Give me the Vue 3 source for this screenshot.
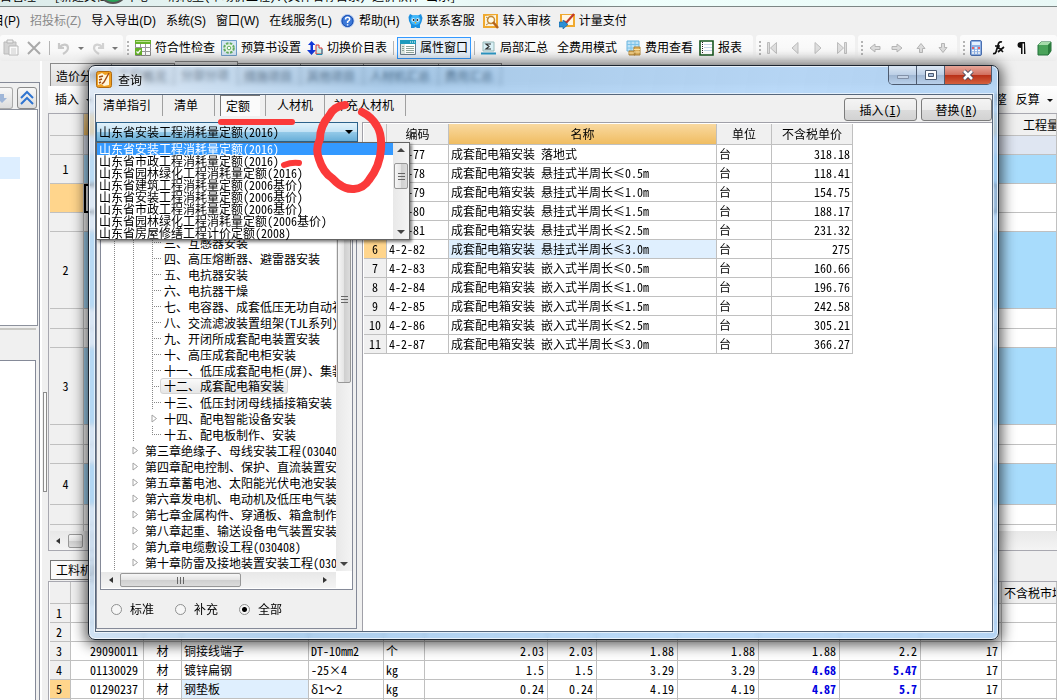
<script setup>
import { ref } from 'vue'

const menus = [
  { t: '目(P)' }, { t: '招投标(Z)', dim: true }, { t: '导入导出(D)' }, { t: '系统(S)' }, { t: '窗口(W)' },
  { t: '在线服务(L)' }, { t: '帮助(H)', icon: 'help' }, { t: '联系客服', icon: 'support' },
  { t: '转入审核', icon: 'audit' }, { t: '计量支付', icon: 'pay' },
]
const pages = ['造价分析', '工程概况', '分部分项', '措施项目', '其他项目', '人材机汇总', '费用汇总']
const upperRows = [
  { h: 19, c: 'pale' }, { n: '1', h: 29, c: 'blue' }, { h: 29, c: 'cur' }, { h: 19 },
  { n: '2', h: 77, c: 'blue' }, { h: 20 }, { h: 19 }, { n: '3', h: 77, c: 'blue' }, { h: 20 }, { h: 19 },
  { n: '4', h: 41, c: 'blue' }, { h: 20 }, { h: 7 },
]
const lowerRows = [
  ['1'], ['2'],
  ['3', '29090011', '材', '铜接线端子', 'DT-10mm2', '个', '2.03', '2.03', '1.88', '1.88', '1.88', '2.2', '17', ''],
  ['4', '01130029', '材', '镀锌扁钢', '-25×4', 'kg', '1.5', '1.5', '3.29', '3.29', '4.68', '5.47', '17', ''],
  ['5', '01290237', '材', '钢垫板', 'δ1～2', 'kg', '0.24', '0.24', '4.19', '4.19', '4.87', '5.7', '17', ''],
  [''],
]
const tabs = ['清单指引', '清单', '定额', '人材机', '补充人材机']
const books = [
  '山东省安装工程消耗量定额(2016)', '山东省市政工程消耗量定额(2016)', '山东省园林绿化工程消耗量定额(2016)',
  '山东省建筑工程消耗量定额(2006基价)', '山东省安装工程消耗量定额(2006基价)', '山东省市政工程消耗量定额(2006基价)',
  '山东省园林绿化工程消耗量定额(2006基价)', '山东省房屋修缮工程计价定额(2008)',
]
const book = ref(books[0])
const scope = ref('全部')
const tree = [
  '三、互感器安装', '四、高压熔断器、避雷器安装', '五、电抗器安装', '六、电抗器干燥', '七、电容器、成套低压无功自动补',
  '八、交流滤波装置组架(TJL系列)', '九、开闭所成套配电装置安装', '十、高压成套配电柜安装', '十一、低压成套配电柜(屏)、集装',
  '十二、成套配电箱安装', '十三、低压封闭母线插接箱安装', '十四、配电智能设备安装', '十五、配电板制作、安装',
].map((t) => ({ t, leaf: !t.startsWith('十四'), sel: t.startsWith('十二'), last: t.startsWith('十五'), lv: 3 })).concat([
  '第三章绝缘子、母线安装工程(03040', '第四章配电控制、保护、直流装置安', '第五章蓄电池、太阳能光伏电池安装', '第六章发电机、电动机及低压电气装',
  '第七章金属构件、穿通板、箱盒制作', '第八章起重、输送设备电气装置安装', '第九章电缆敷设工程(030408)', '第十章防雷及接地装置安装工程(030',
].map((t) => ({ t, leaf: false, lv: 2 })))
const quota = [
  ['落地式', '318.18'], ['悬挂式半周长≤0.5m', '118.41'], ['悬挂式半周长≤1.0m', '154.75'], ['悬挂式半周长≤1.5m', '188.17'],
  ['悬挂式半周长≤2.5m', '231.32'], ['悬挂式半周长≤3.0m', '275'], ['嵌入式半周长≤0.5m', '160.66'], ['嵌入式半周长≤1.0m', '196.76'],
  ['嵌入式半周长≤1.5m', '242.58'], ['嵌入式半周长≤2.5m', '305.21'], ['嵌入式半周长≤3.0m', '366.27'],
].map(([s, p], i) => ({ n: i + 1, code: '4-2-' + (77 + i), name: '成套配电箱安装 ' + s, price: p }))
</script>

<template>
  <div class="app">
    <header class="caption"><span>目管理 - [新建文档 - 中心 - 消耗量(市场价工程).(文件名称目录) 造价软件 山东]</span><i class="orb"></i></header>

    <nav class="menu">
      <button v-for="m in menus" :key="m.t" :class="{ dim: m.dim, wi: m.icon }">
        <svg v-if="m.icon === 'help'" width="15" height="16" viewBox="0 0 15 16"><circle cx="7.500" cy="8" r="6.500" fill="#3b78d8" stroke="#b8cdf0" /><circle cx="7.500" cy="8" r="5.500" fill="none" stroke="#1b4fb0" /><path d="M5.500 6.500q0-2.200 2.100-2.200t2.100 2q0 1.200-2.100 2.300V10M7.600 11.200v1.300" fill="none" stroke="#fff" stroke-width="1.500" /></svg>
        <svg v-else-if="m.icon === 'support'" width="15" height="16" viewBox="0 0 15 16"><path d="M2 1l3 1.500h5L13 1l1.500 4-1 4L12 12v3H9l-1.500-1L6 15H3v-3L1 8 .5 4z" fill="#1b8fe0" /><circle cx="7.500" cy="7" r="5" fill="#42b8fa" /><circle cx="5.300" cy="7" r="1.800" fill="#fff" /><circle cx="9.700" cy="7" r="1.800" fill="#fff" /><circle cx="5.600" cy="7" r="1" fill="#123" /><circle cx="9.400" cy="7" r="1" fill="#123" /><path d="M6.500 9h2l-1 2z" fill="#f9b233" /></svg>
        <svg v-else-if="m.icon === 'audit'" width="16" height="16" viewBox="0 0 16 16"><path d="M0 1h15v14H0z" fill="#f0a92e" /><path d="M2 3l11-1v11H2z" fill="#fbf4df" /><circle cx="8" cy="7" r="3.500" fill="#fffbe8" stroke="#c58a35" stroke-width="1.500" /><path d="M10 9l5 6" stroke="#b5651d" stroke-width="2.500" /><path d="M3 4l3 2M3 12l3-2" stroke="#b98b52" /></svg>
        <svg v-else-if="m.icon === 'pay'" width="16" height="16" viewBox="0 0 16 16"><path d="M1 1h15v13H1z" fill="#f0a92e" /><path d="M3 2h11v10H3z" fill="#fff6e4" /><path d="M15 1L7 10l-2-2" fill="none" stroke="#c0392b" stroke-width="2.200" /><path d="M0 9h4V7l5 4.500L4 16v-2H0z" fill="#2b8fd6" stroke="#0e5e9c" stroke-width=".6" /></svg>
        {{ m.t }}
      </button>
    </nav>

    <div class="tools">
      <div class="band b1">
        <button aria-label="粘贴"><svg width="16" height="18" viewBox="0 0 16 18"><path d="M1 3h12v12H1z" fill="#d4d4d4" stroke="#bbb" /><path d="M4 1h6v3H4z" fill="#eee" stroke="#b5b5b5" /><path d="M6 7h9v9H6z" fill="#fafafa" stroke="#b8b8b8" /><path d="M8 10h5M8 12h5M8 14h5" stroke="#ccc" /></svg></button>
        <button class="g7" aria-label="删除"><svg width="16" height="16" viewBox="0 0 16 16"><path d="M2 2l12 12M14 2L2 14" stroke="#a9a9a9" stroke-width="2" /></svg></button>
        <i class="sep g7"></i>
        <button class="g7" aria-label="撤销"><svg width="14" height="14" viewBox="0 0 14 14"><path d="M2 2v5h5M2.500 6.500C6 2 11 3 11 7q0 3-5 6" fill="none" stroke="#c9c9c9" stroke-width="2.200" /></svg></button>
        <i class="dd g7 gray"></i>
        <button class="g7" aria-label="重做"><svg width="14" height="14" viewBox="0 0 14 14"><path d="M12 2v5H7M11.500 6.500C8 2 3 3 3 7q0 3 5 6" fill="none" stroke="#d2d2d2" stroke-width="2.200" /></svg></button>
        <i class="dd g7 gray"></i>
      </div>
      <div class="band b2">
        <i class="grip"></i>
        <button><svg width="16" height="16" viewBox="0 0 16 16"><path d="M.5.5h15v15H.5z" fill="#fff" stroke="#888" /><path d="M0 0h16v4H0z" fill="#67b22b" /><path d="M1 1.500h14" stroke="#b9e08c" /><path d="M0 7.500h16M0 11.500h16M5.500 4v12M10.500 4v12" stroke="#999" /><path d="M0 8h7v7H0z" fill="#67b22b" /><path d="M1.500 11.500L3 13l2.500-3" fill="none" stroke="#fff" stroke-width="1.200" /></svg>符合性检查</button>
        <button><svg width="16" height="16" viewBox="0 0 16 16"><path d="M.5.5h15v15H.5z" fill="#d6e6f4" stroke="#6f9fca" /><circle cx="8" cy="8" r="4.800" fill="#eaf6e6" stroke="#63ad60" stroke-width="2" stroke-dasharray="2.500 1.300" /><circle cx="8" cy="8" r="1.800" fill="#fff" stroke="#63ad60" /></svg>预算书设置</button>
        <button><svg width="16" height="16" viewBox="0 0 16 16"><path d="M4.500 1L1 5h2.500v5H0l4.500 5L9 10H6V5h2.500z" fill="#1238d8" /><path d="M9 9V5h3v3h3v6H9z" fill="#c8f1ee" stroke="#d33" /><path d="M9.500 14.500H15V9" fill="none" stroke="#1a93b8" /></svg>切换价目表</button>
        <i class="sep"></i>
        <button class="on"><svg width="16" height="16" viewBox="0 0 16 16"><path d="M.5.5h15v14H.5z" fill="#fff" stroke="#687c8c" /><path d="M0 0h16v4H0z" fill="#1c9bbd" /><path d="M10 2h1M12 2h1M14 2h1" stroke="#fff" /><path d="M1 4h4v10H1z" fill="#dde9e2" /><path d="M2 6.500h2M2 8.500h2M2 10.500h2M6 6.500h8M6 8.500h8M6 10.500h8M6 12.500h8" stroke="#8fa69a" /></svg>属性窗口</button>
        <i class="sep"></i>
        <button><svg width="15" height="16" viewBox="0 0 15 16"><path d="M2 2h11v9H2z" fill="#d9f0f6" stroke="#9bb" /><path d="M10 4H5l3 2.500L5 9h5" fill="none" stroke="#333" stroke-width="1.200" /><path d="M0 13.500h15" stroke="#2b97c4" stroke-width="2" /></svg>局部汇总</button>
        <button class="plain">全费用模式</button>
        <button><svg width="15" height="16" viewBox="0 0 15 16"><path d="M1 1h12v10H1z" fill="#bfe3f7" stroke="#6bb4de" /><path d="M1 4.500h12M1 8h12M5 1v10M9 1v10" stroke="#7cc3ea" /><path d="M3 11h6v4H3zM8 7h6v8H8z" fill="#e0b25c" stroke="#b08438" /><path d="M8 9.500h6M8 12h6M3 13h5" stroke="#fbe2a4" /></svg>费用查看</button>
        <button><svg width="15" height="16" viewBox="0 0 15 16"><path d="M1 1h13v14H1z" fill="#fff" stroke="#17581f" stroke-width="1.600" /><path d="M3.500 2v12" stroke="#222" stroke-dasharray="1 1" /><path d="M5 4.500h8M5 7.500h8M5 10.500h8" stroke="#c3d5e5" /></svg>报表</button>
      </div>
      <div class="band b3">
        <i class="grip"></i>
        <svg width="88" height="14" viewBox="0 0 88 14" fill="#dedede" stroke="#bdbdbd"><path d="M4.500 1.500h2v11h-2zM13.500 1.500v11l-6-5.500zM35 1.500v11L29 7zM52 1.500v11L58 7zM74.500 1.500v11l6-5.500zM81.500 1.500h2v11h-2z" /></svg>
      </div>
      <div class="band b3">
        <i class="grip"></i>
        <svg width="88" height="14" viewBox="0 0 88 14" fill="#dcdcdc" stroke="#b5b5b5"><path d="M5 7l5-4v2.500h5v3h-5V11zM37 7l-5-4v2.500h-5v3h5V11zM56 2.500l4 5h-2.500v4h-3v-4H52zM78 11.500l4-5h-2.500v-4h-3v4H74z" /></svg>
      </div>
      <div class="band b4">
        <i class="grip"></i>
        <svg width="94" height="18" viewBox="0 0 94 18"><rect x="3.500" y="1.500" width="11" height="15" rx="1.500" fill="#8fb2e6" stroke="#4a6fb0" /><path d="M5 3h8v3H5z" fill="#e6f2ff" /><path d="M5 9h2M8 9h2M11 9h2M5 11.500h2M8 11.500h2M11 11.500h2M5 14h2M8 14h2M11 14h2" stroke="#fff" stroke-width="1.500" /><path d="M5 9h2M11 9h2" stroke="#e33" stroke-width="1.500" /><path d="M35 3q-3-1-4 3l-2 7q-.6 2-3 1.500M28 7h5M31 8l5 5M37 8l-6 5" fill="none" stroke="#111" stroke-width="1.700" /><path d="M58 3h-4q-3.500 0-3.500 3t3.500 3v6h1.500V4.500H57V15h1.500z" fill="#111" /><path d="M71 6l3-3h10v9l-3 4H71z" fill="#4aa35a" stroke="#23713a" /><path d="M71 6l3-3h10l-3 3z" fill="#a6dcaa" /><path d="M81 6l3-3v9l-3 4z" fill="#2c7c3d" /></svg>
      </div>
    </div>

    <div class="work">
      <aside class="side">
        <div class="navbtns">
          <button class="cut" aria-label="下移"><svg width="12" height="12" viewBox="0 0 12 12"><path d="M0 2h4v4h3L2 11 0 9z" fill="#9fb6d8" /></svg></button>
          <button aria-label="折叠"><svg width="16" height="16" viewBox="0 0 16 16"><path d="M2 8l6-6 6 6M2 14l6-6 6 6" fill="none" stroke="#2f74d0" stroke-width="2" /></svg></button>
        </div>
        <div class="sbox"><i></i></div>
        <div class="sgap"></div>
        <div class="sbox2"></div>
      </aside>
      <div class="split"><i></i></div>
      <main class="main">
        <div class="pages"><button v-for="(p, i) in pages" :key="p" :class="{ act: i === 2 }">{{ p }}</button></div>
        <div class="cmds"><button>插入 <i class="dd"></i></button><span><button>整</button><button>反算 <i class="dd"></i></button></span></div>
        <div class="upper">
          <table>
            <colgroup><col class="c34" /><col /><col class="c60" /></colgroup>
            <thead><tr><th></th><th class="gold"></th><th class="qty">工程量</th></tr></thead>
            <tbody>
              <tr v-for="(r, i) in upperRows" :key="i" :class="r.c" :style="{ height: r.h + 'px' }"><th>{{ r.n }}</th><td></td><td></td></tr>
            </tbody>
          </table>
          <div class="hbar"><i class="al"></i><b></b></div>
        </div>
        <div class="ltabs"><button>工料机显示</button></div>
        <div class="lower">
          <table>
            <colgroup><col class="w21" /><col class="w73" /><col class="w38" /><col class="w127" /><col class="w75" /><col class="w41" /><col class="w123" /><col class="w49" /><col v-for="n in 5" :key="n" class="w81" /><col /></colgroup>
            <thead><tr><th v-for="n in 13" :key="n"></th><th class="mkt">不含税市场价</th></tr></thead>
            <tbody>
              <tr v-for="r in lowerRows" :key="r[0]">
                <th :class="{ cur: r[0] === '5' }">{{ r[0] }}</th>
                <td v-for="c in 13" :key="c" :class="{ num: c === 1 || (c > 5 && c < 13), mid: c === 2, hot: (c === 10 || c === 11) && r[0] > '3', pick: r[0] === '5' && c === 3 }">{{ r[c] }}</td>
              </tr>
            </tbody>
          </table>
        </div>
      </main>
    </div>

    <section class="dialog" role="dialog" aria-label="查询">
      <div class="dtitle">
        <svg width="16" height="17" viewBox="0 0 16 17"><rect x=".5" y=".5" width="15" height="16" rx="2" fill="#f0a020" stroke="#b06a10" /><path d="M2 4l4-2 3 2 4-1v11l-5 1-3-2-3 1z" fill="#fff7dc" /><path d="M13 2L8 11l-2 2M3 6l4-1M3 9l3-1M3 12l2-1" fill="none" stroke="#a04a12" stroke-width="1.400" /></svg>
        <h1>查询</h1>
        <div class="wbtns">
          <button aria-label="最小化"><svg width="14" height="12" viewBox="0 0 14 12"><path d="M1.500 6.500h11v3h-11z" fill="#c5d3e6" stroke="#8291a8" /></svg></button>
          <button aria-label="最大化"><svg width="14" height="12" viewBox="0 0 14 12"><path d="M1.500 1.500h11v9h-11z" fill="#fff" stroke="#4b5a70" /><path d="M4.500 4.500h5v3h-5z" fill="#a9bfdc" stroke="#4b5a70" /></svg></button>
          <button class="x" aria-label="关闭"><svg width="14" height="12" viewBox="0 0 14 12"><path d="M3 2l8 8M11 2l-8 8" stroke="#43465c" stroke-width="4.500" /><path d="M3 2l8 8M11 2l-8 8" stroke="#fff" stroke-width="2.600" /></svg></button>
        </div>
      </div>
      <div class="dbody">
        <div class="dtabs">
          <button v-for="(t, i) in tabs" :key="t" :class="{ act: i === 2 }"><span>{{ t }}</span></button>
          <div class="acts"><button>插入(<u>I</u>)</button><button>替换(<u>R</u>)</button></div>
        </div>
        <div class="cols">
          <div class="lcol">
            <div class="combo">
              <select v-model="book" aria-label="定额库"><option v-for="b in books" :key="b">{{ b }}</option></select>
              <div class="drop">
                <ul><li v-for="(b, i) in books" :key="b" :class="{ act: i === 0 }">{{ b }}</li></ul>
                <div class="vbar"><i class="au"></i><b class="t1"></b><i class="ad"></i></div>
              </div>
            </div>
            <div class="pane">
              <div class="treebox">
                <div class="trow">
                  <ul class="tree">
                    <li v-for="n in tree" :key="n.t" :class="['lv' + n.lv, { leaf: n.leaf, last: n.last }]">
                      <svg v-if="!n.leaf" width="7" height="9" viewBox="0 0 7 9"><path d="M1 1l4.500 3.500L1 8z" fill="#fff" stroke="#a2a2a2" /></svg>
                      <span :class="{ sel: n.sel }">{{ n.t }}</span>
                    </li>
                  </ul>
                  <div class="vbar"><i class="au"></i><b class="t2"></b><i class="ad"></i></div>
                </div>
                <div class="hbar"><i class="al"></i><b></b><i class="ar"></i></div>
              </div>
              <div class="radios">
                <label v-for="s in ['标准', '补充', '全部']" :key="s"><input v-model="scope" type="radio" name="scope" :value="s" />{{ s }}</label>
              </div>
            </div>
          </div>
          <div class="rcol">
            <table>
              <colgroup><col class="w23" /><col class="w62" /><col class="w268" /><col class="w55" /><col class="w81" /></colgroup>
              <thead><tr><th></th><th>编码</th><th class="gold">名称</th><th>单位</th><th>不含税单价</th></tr></thead>
              <tbody>
                <tr v-for="q in quota" :key="q.n" :class="{ act: q.n === 6 }"><th>{{ q.n > 5 ? q.n : '' }}</th><td>{{ q.code }}</td><td class="nm">{{ q.name }}</td><td>台</td><td class="num">{{ q.price }}</td></tr>
              </tbody>
            </table>
          </div>
        </div>
      </div>
      <svg class="marks" width="320" height="110" viewBox="0 0 320 110" fill="none" stroke="#fb3a3a" stroke-linecap="round" stroke-linejoin="round">
        <path d="M132 26H203" stroke-width="6" /><path d="M195 69q8-3 15-2" stroke-width="6" />
        <path d="M256 9Q245 10 240 20Q231 30 231 43Q226 53 230 63Q234 76 243 82Q254 94 265 93Q275 92 280 84Q291 70 292 53Q293 38 288 30Q283 21 273 16" stroke-width="8" />
      </svg>
    </section>
  </div>
</template>

<style>
html, body { margin: 0; overflow: hidden; background: #f0f0f0; }
</style>

<style scoped>
.app { position: relative; display: flex; flex-direction: column; height: 100vh; overflow: hidden; background: #f0f0f0; color: #000; font: 12px/16px "Noto Sans Mono CJK SC", "Liberation Serif", "Noto Sans CJK SC", monospace; white-space: nowrap; }
* { box-sizing: border-box; }
svg { flex: none; display: block; }
button { font: inherit; color: inherit; border: 0; padding: 0; margin: 0; background: none; white-space: nowrap; flex: none; }
ul { list-style: none; margin: 0; padding: 0; }
table { border-collapse: separate; border-spacing: 0; table-layout: fixed; }
th { font-weight: 400; background: #f0f0f0; }
th, td { padding: 0 2px; overflow: hidden; border: solid #c0c0c0; border-width: 0 1px 1px 0; }
.caption { position: relative; flex: none; height: 7px; overflow: hidden; background: linear-gradient(90deg, #dcebea, #eefdfb 40%, #e4f3f2 50%, #effffc 60%, #e9f8f6); border-bottom: 1px solid #7d8685; }
.caption span { display: block; margin-top: -12px; }
.orb { position: absolute; left: 98px; top: -26px; width: 30px; height: 30px; border-radius: 50%; background: #2aa558; border: 2px solid #555; }
.menu { flex: none; display: flex; align-items: center; gap: 10px; height: 28px; margin-left: -8px; font-family: "Liberation Sans", "Noto Sans CJK SC", sans-serif; }
.menu button { display: flex; align-items: center; gap: 4px; }
.menu .dim { color: #8a8a8a; }
.menu .wi { margin-left: -2px; }
.tools { flex: none; display: flex; gap: 3px; height: 26px; font-family: "Liberation Sans", "Noto Sans CJK SC", sans-serif; }
.band { display: flex; align-items: center; height: 26px; border-radius: 3px; background: linear-gradient(#fcfcfc, #f8f8f8 60%, #ececec); }
.b1 { width: 123px; padding-left: 3px; flex: none; }
.b2 { gap: 6px; width: 627px; flex: none; padding-left: 1px; }
.b3 { width: 99px; flex: none; padding-left: 3px; gap: 2px; }
.b4 { flex: 1; padding-left: 3px; gap: 2px; overflow: hidden; }
.band button { display: flex; align-items: center; gap: 4px; height: 22px; }
.g7 { margin-left: 7px; }
.sep { flex: none; width: 1px; height: 14px; background: #b4b4b4; }
.grip { flex: none; width: 2px; height: 15px; background: repeating-linear-gradient(#b4b4b4 0 2px, transparent 2px 4px); }
.band .on { border: 1px solid #3399ff; background: #e6f0fa; padding: 0 2px; margin: 0 -3px; }
.band .plain { margin: 0 3px; }
.dd { display: inline-block; width: 0; height: 0; border: solid transparent; border-width: 3px 3px 0; border-top-color: #111; vertical-align: middle; }
.dd.gray { border-top-color: #777; }
.work { flex: 1; min-height: 0; display: flex; }
.side { flex: none; width: 40px; margin-top: 21px; border: solid #858a98; border-width: 1px 1px 0 0; background: #f0f0f0; }
.navbtns { display: flex; gap: 4px; padding-top: 4px; height: 26px; }
.navbtns button { width: 20px; height: 22px; border: 1px solid #8a8a8a; border-radius: 3px; background: linear-gradient(#f8f8f8, #ddd); display: flex; align-items: center; justify-content: center; }
.navbtns .cut { width: 13px; border-left: 0; border-radius: 0 3px 3px 0; justify-content: flex-start; border-color: #aaa; }
.sbox { height: 217px; width: 38px; border: solid #8c919c; border-width: 1px 1px 1px 0; background: #fff; padding-top: 47px; }
.sbox i { display: block; width: 20px; height: 22px; background: #ddeeff; }
.sgap { height: 32px; margin-top: 2px; border-top: 2px solid #c8c8c4; width: 36px; }
.sbox2 { height: 100%; width: 36px; border: solid #858a98; border-width: 1px 1px 0 0; background: #fff; }
.split { flex: none; width: 8px; padding-top: 331px; border-left: 2px solid #fff; }
.split i { display: block; width: 4px; height: 100px; border: 1px solid #8c8c8c; margin-left: 1px; background: #fafafa; }
.main { flex: 1; min-width: 0; display: flex; flex-direction: column; }
.pages { flex: none; display: flex; padding: 2px 0 0 2px; height: 25px; }
.pages button { height: 24px; padding: 0 8px 0 6px; border: solid #8a8a8a; border-width: 1px 1px 0 0; background: linear-gradient(#f0f0f0, #dcdcdc); }
.pages button:first-child { border-left-width: 1px; padding: 0 7px 0 5px; }
.pages .act { margin-top: -2px; height: 26px; background: #f0f0f0; }
.cmds { flex: none; display: flex; justify-content: space-between; height: 27px; padding: 0 4px 0 7px; align-items: center; background: linear-gradient(#fff, #f0f0f0); font-family: "Liberation Sans", "Noto Sans CJK SC", sans-serif; }
.cmds .dd { margin-left: 4px; }
.cmds span { display: flex; gap: 9px; }
.upper { flex: none; height: 438px; border: solid #a8a8b0; border-width: 1px 0 1px 1px; padding-left: 1px; background: #f0f0f0; display: flex; flex-direction: column; }
.upper table { width: 100%; }
.upper tbody th { padding-right: 4px; }
.upper thead tr { height: 22px; }
.upper td { background: #fff; }
.blue td { background: #a8dcfc; }
.pale td { background: #dfe6f2; }
.cur th { background: #ffd58c; }
.cur td:nth-child(2) { border: 2px solid #000; }
.c34 { width: 34px; } .c60 { width: 60px; }
.gold { background: linear-gradient(#f9d9a0, #f0bd62); }
.qty { text-align: left; padding-left: 26px; }
.hbar { flex: none; display: flex; align-items: center; height: 16px; background: linear-gradient(#e8e8e8, #f4f4f4); }
.upper .hbar { height: 19px; margin-top: -1px; padding-left: 6px; gap: 8px; }
.upper .hbar b { width: 15px; }
.hbar b { height: 14px; border: 1px solid #979797; border-radius: 2px; background: linear-gradient(#f6f6f6, #e4e4e4 50%, #cfcfcf 52%, #dcdcdc); }
.al, .ar, .au, .ad { flex: none; width: 0; height: 0; border: 4px solid transparent; }
.al { border-width: 3px 4px 3px 0; border-right-color: #333; }
.ar { border-width: 3px 0 3px 4px; border-left-color: #333; }
.au { border-width: 0 4px 4px; border-bottom-color: #444; }
.ad { border-width: 4px 4px 0; border-top-color: #444; }
.ltabs { flex: none; height: 30px; padding: 9px 0 0 2px; }
.ltabs button { height: 20px; padding: 0 5px; border: 1px solid #777; background: #fafafa; }
.lower { flex: 1; min-height: 0; overflow: hidden; border: solid #a8a8b0; border-width: 1px 0 0 1px; padding-left: 1px; background: #fff; }
.lower table { width: 100%; }
.lower tbody th { padding-right: 4px; }
.lower thead tr { height: 22px; } .lower tbody tr { height: 19px; }
.w21 { width: 21px; } .w73 { width: 73px; } .w38 { width: 38px; } .w127 { width: 127px; } .w75 { width: 75px; } .w41 { width: 41px; } .w123 { width: 123px; } .w49 { width: 49px; } .w81 { width: 81px; }
.num { text-align: right; }
.lower .num { padding-right: 3px; }
.lower td:nth-child(2) { padding-right: 5px; }
.mid { text-align: center; }
.hot { color: #0000e0; font-weight: 700; }
.pick { background: #dfeffe; }
th.cur { background: #ffd58c; }
.mkt { text-align: left; }

.dialog { position: absolute; left: 88px; top: 65px; right: 58px; bottom: 60px; display: flex; flex-direction: column; padding: 0 6px 7px; border: 1px solid #1c2530; border-radius: 7px; background: linear-gradient(100deg, rgba(206, 222, 240, .6), rgba(120, 175, 225, .6) 30%, rgba(150, 198, 245, .65) 70%, rgba(150, 195, 240, .7)); backdrop-filter: blur(2px); box-shadow: inset 0 0 0 1px rgba(255, 255, 255, .7), 0 2px 14px 3px rgba(0, 0, 0, .65); }
.dtitle { flex: none; display: flex; height: 28px; padding: 5px 0 0 1px; }
.dtitle h1 { margin: 1px 0 0 6px; font: 12px/16px "Noto Sans CJK SC", sans-serif; flex: 1; text-shadow: 0 0 5px #fff, 0 0 8px #fff; }
.wbtns { display: flex; align-self: flex-start; margin-top: -5px; height: 19px; border: 1px solid #4d5b70; border-top: 0; border-radius: 0 0 5px 5px; overflow: hidden; }
.wbtns button { width: 28px; display: flex; align-items: center; justify-content: center; background: linear-gradient(#dce8f5, #bccfe6 48%, #9fb6d2 50%, #b9d0ea); border-right: 1px solid #4d5b70; }
.wbtns .x { width: 46px; border: 0; background: linear-gradient(#e7a79a, #d2705f 48%, #b82f16 50%, #d4603e); }
.dbody { flex: 1; min-height: 0; display: flex; flex-direction: column; background: #f0f0f0; border: 1px solid #56677c; box-shadow: 0 0 0 1px rgba(255, 255, 255, .6); margin-right: -1px; }
.dtabs { flex: none; display: flex; height: 27px; background: #f0f0f0; }
.dtabs > button { height: 21px; padding: 0 11px; border-right: 1px solid #a0a0a0; line-height: 20px; }
.dtabs > button span { display: block; height: 21px; }
.dtabs > button:first-child { padding-left: 7px; }
.dtabs > button:nth-child(2) { padding-right: 16px; }
.dtabs > .act { padding: 0 5px; }
.dtabs > .act span { padding: 0 10px 0 5px; border: solid #777; border-width: 1px 0 0 1px; background: #fafafa; }
.dtabs > button:nth-child(5) { padding-left: 9px; }
.acts { margin-left: auto; display: flex; gap: 4px; padding-top: 3px; }
.acts button { width: 73px; height: 23px; border: 1px solid #7c7c7c; border-radius: 3px; background: linear-gradient(#f4f4f4, #ececec 50%, #dcdcdc 52%, #d2d2d2); }
.acts button:last-child { width: 71px; }
.cols { flex: 1; min-height: 0; display: flex; gap: 4px; }
.lcol { flex: none; width: 262px; display: flex; flex-direction: column; }
.combo { position: relative; flex: none; height: 20px; }
.combo select { appearance: none; display: block; width: 262px; height: 20px; margin: 0; padding: 0 2px; font: inherit; line-height: 18px; border: 1px solid #2c628b; border-radius: 0; color: #000; background: linear-gradient(#e2f2fb, #c2e2f5 48%, #93c9e8 52%, #68aed8); }
.combo::after { content: ""; position: absolute; right: 5px; top: 8px; border: solid transparent; border-width: 4px 4px 0; border-top-color: #000; }
.drop { position: absolute; z-index: 2; left: 0; top: 20px; width: 314px; display: flex; border: 1px solid #646464; background: #fff; box-shadow: 2px 2px 3px rgba(0, 0, 0, .5); }
.drop ul { flex: 1; }
.drop li { height: 12px; line-height: 11px; padding-left: 2px; }
.drop .act { background: #3399ff; color: #fff; }
.vbar { flex: none; width: 16px; display: flex; flex-direction: column; align-items: center; padding: 5px 0; background: linear-gradient(90deg, #e8e8e8, #f4f4f4); }
.vbar b { width: 14px; border: 1px solid #979797; border-radius: 2px; background: repeating-linear-gradient(transparent 0 1px, #666 1px 2px, transparent 2px 3px) center / 7px 9px no-repeat, linear-gradient(90deg, #f6f6f6, #e4e4e4 50%, #cfcfcf 52%, #dcdcdc); }
.t1 { height: 26px; margin-top: 11px; }
.t2 { height: 168px; margin-top: 63px; }
.vbar .ad { margin-top: auto; }
.pane { flex: 1; min-height: 0; display: flex; flex-direction: column; width: 261px; padding: 0 3px; border: 1px solid #858a98; border-top: 0; margin: 0 0 2px; }
.treebox { flex: 1; min-height: 0; display: flex; flex-direction: column; border: 1px solid #858a98; background: #fff; padding-bottom: 1px; }
.trow { flex: 1; min-height: 0; display: flex; overflow: hidden; margin-bottom: 1px; }
.tree { flex: 1; min-width: 0; overflow: hidden; padding-top: 91px; background: repeating-linear-gradient(#888 0 1px, transparent 1px 2px) 13px 0 / 1px 100% no-repeat; }
.tree li { display: flex; align-items: center; height: 16px; }
.lv3 { padding-left: 50px; background: repeating-linear-gradient(#888 0 1px, transparent 1px 2px) 32px 0 / 1px 16px no-repeat; }
.lv3.leaf { padding-left: 59px; background: repeating-linear-gradient(#888 0 1px, transparent 1px 2px) 32px 0 / 1px 16px no-repeat, repeating-linear-gradient(#888 0 1px, transparent 1px 2px) 51px 0 / 1px 16px no-repeat, repeating-linear-gradient(90deg, #888 0 1px, transparent 1px 2px) 51px 8px / 9px 1px no-repeat; }
.lv3.leaf.last { background: repeating-linear-gradient(#888 0 1px, transparent 1px 2px) 32px 0 / 1px 16px no-repeat, repeating-linear-gradient(#888 0 1px, transparent 1px 2px) 51px 0 / 1px 8px no-repeat, repeating-linear-gradient(90deg, #888 0 1px, transparent 1px 2px) 51px 8px / 9px 1px no-repeat; }
.lv2 { padding-left: 31px; }
.tree li svg { margin-right: 2px; }
.tree li span { padding: 0 0 0 4px; line-height: 15px; }
.tree li .sel { padding: 0 3px; border: 1px solid #d4d4d4; border-radius: 3px; background: linear-gradient(#fafafa, #e6e6e6); line-height: 14px; }
.treebox .hbar { padding: 0 9px 0 8px; margin-right: 16px; }
.treebox .hbar b { width: 121px; margin-left: 7px; margin-right: auto; background: repeating-linear-gradient(90deg, transparent 0 1px, #666 1px 2px, transparent 2px 3px) center / 9px 7px no-repeat, linear-gradient(#f6f6f6, #e4e4e4 50%, #cfcfcf 52%, #dcdcdc); }
.radios { flex: none; display: flex; gap: 21px; height: 38px; padding-left: 11px; align-items: center; }
.radios label { display: flex; align-items: center; gap: 8px; }
.radios input { appearance: none; width: 11px; height: 11px; margin: 0; border: 1px solid #8e8f8f; border-radius: 50%; background: #f6f6f6; }
.radios input:checked { background: radial-gradient(circle, #000 0 2px, #f6f6f6 3px); }
.rcol { flex: 1; min-width: 0; border: solid #a0a0a8; border-width: 1px 0 0 1px; background: #fff; padding: 1px 0 0 1px; overflow: hidden; }
.rcol table { width: 489px; }
.w23 { width: 23px; } .w62 { width: 62px; } .w268 { width: 268px; } .w55 { width: 55px; }
.rcol thead tr { height: 21px; } .rcol tbody tr { height: 19px; }
.rcol thead .gold { background: linear-gradient(#f9d9a0, #f0bd62); }
.act th { background: #ffd58c; } .act .nm { background: #dfeffe; }
.marks { position: absolute; left: 0; top: 30px; z-index: 3; pointer-events: none; }
</style>
